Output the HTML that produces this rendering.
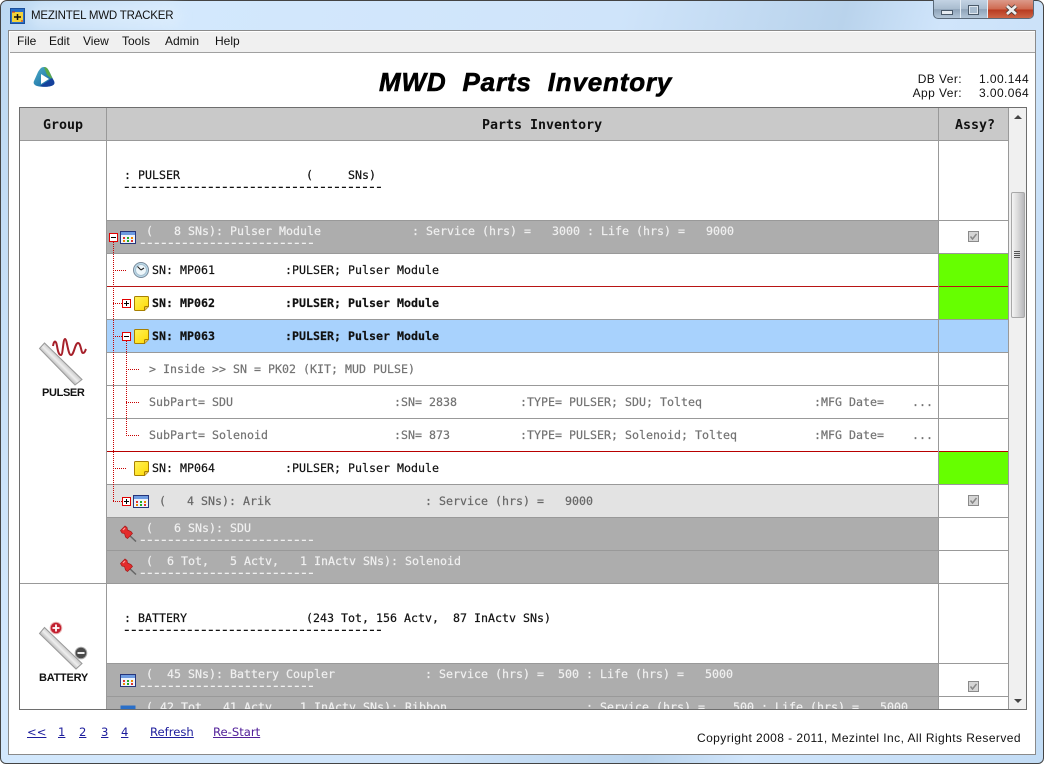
<!DOCTYPE html>
<html><head><meta charset="utf-8"><style>
html,body{margin:0;padding:0;width:1044px;height:764px;overflow:hidden;background:#fff}
#w{position:absolute;left:0;top:0;width:1042px;height:762px;border:1px solid #444;border-radius:7px 7px 6px 6px;overflow:hidden;
background:linear-gradient(105deg,#bcd8f2 0,#d3e8fd 15%,#cfe4fa 50%,#b9d3ec 68%,#d0e5fb 76%,#c2dcf5 100%)}
.a{position:absolute}
.t{position:absolute;white-space:pre;font:11.63px/16px "DejaVu Sans Mono","Liberation Mono",monospace;color:#111;-webkit-text-stroke:.2px currentColor}
.k{position:absolute;white-space:pre;font:16px/16px "DejaVu Sans Mono",monospace;letter-spacing:-2.63px;color:#111}
.s{position:absolute;white-space:pre;font:12px/16px "Liberation Sans",sans-serif;color:#111}
.w{color:#f0f0f0}.g{color:#737373}.d{color:#666}.b{font-weight:bold}
.h{position:absolute;white-space:pre;font:bold 13.3px/16px "DejaVu Sans Mono",monospace;color:#111;top:118px}
.l{position:absolute;height:1px;left:19px;width:990px;background:#999}
.v{position:absolute;width:1px;background:#999}
.r{position:absolute;left:107px;width:832px}
.u{text-decoration:underline;color:#1c1c9c;position:absolute;white-space:pre;font:11.6px/16px "DejaVu Sans",sans-serif;top:724px}
.dv{position:absolute;width:1px;background:repeating-linear-gradient(180deg,#c80000 0 1px,transparent 1px 2px)}
.dh{position:absolute;height:1px;background:repeating-linear-gradient(90deg,#c80000 0 1px,transparent 1px 2px)}
</style></head><body>
<div id="w"></div>
<!-- title bar -->
<div class="a" style="left:30px;top:4px;width:150px;height:24px;background:#e2f0fd;opacity:.55;filter:blur(6px);border-radius:10px"></div>
<svg class="a" style="left:10px;top:8px" width="15" height="16"><rect x=".5" y=".5" width="14" height="15" fill="#2a6fc8" stroke="#1b4f9a"/><rect x="2" y="4" width="11" height="10" fill="#f2d23a"/><path d="M4 9h7M7.500 6v6" stroke="#111" stroke-width="1.500"/><path d="M2 4h3M11 13h2" stroke="#c22" /></svg>
<div class="s" style="left:31px;top:8px;color:#111;font-size:11.5px;letter-spacing:-.2px">MEZINTEL MWD TRACKER</div>
<!-- window buttons -->
<div class="a" style="left:933px;top:0;width:101px;height:19px;border:1px solid #5a6a7a;border-top:0;border-radius:0 0 5px 5px;box-sizing:border-box;background:linear-gradient(#c3d3e4,#a9bccf 50%,#8fa4b9 52%,#b3c6d8);overflow:hidden">
<div class="a" style="left:53px;top:0;width:47px;height:19px;background:linear-gradient(#dc9a8a,#cf6a50 48%,#b83a20 52%,#d06a4a)"></div>
<div class="a" style="left:26px;top:0;width:1px;height:19px;background:#e4edf5"></div>
<div class="a" style="left:53px;top:0;width:1px;height:19px;background:#e4edf5"></div></div>
<div class="a" style="left:941px;top:10px;width:10px;height:3px;background:#e6ecf2;border:1px solid #4a5a6a"></div>
<div class="a" style="left:968px;top:5px;width:9px;height:8px;border:1px solid #4a5a6a;box-shadow:0 0 0 1px #dfe7ef inset;background:#a8bccf"></div>
<svg class="a" style="left:1003px;top:3px" width="18" height="14"><path d="M4 3l9 8M13 3L4 11" stroke="#4a3a36" stroke-width="4.500"/><path d="M4 3l9 8M13 3L4 11" stroke="#eee" stroke-width="2.800"/></svg>
<!-- client -->
<div class="a" style="left:9px;top:31px;width:1026px;height:723px;background:#fff;outline:1px solid #8a8a8a"></div>
<div class="a" style="left:10px;top:32px;width:1025px;height:20px;background:#f0f0f0;border-bottom:1px solid #a0a0a0"></div>
<div class="s" style="left:17px;top:33px">File</div>
<div class="s" style="left:49px;top:33px">Edit</div>
<div class="s" style="left:83px;top:33px">View</div>
<div class="s" style="left:122px;top:33px">Tools</div>
<div class="s" style="left:165px;top:33px">Admin</div>
<div class="s" style="left:215px;top:33px">Help</div>
<!-- logo -->
<svg class="a" style="left:32px;top:65px" width="24" height="24"><defs><linearGradient id="lg" x1="0" y1="0" x2="1" y2="1"><stop offset="0" stop-color="#4fb0c8"/><stop offset="1" stop-color="#0f5f9e"/></linearGradient></defs><path d="M12 2c3 0 4 2 6 6l4 8c1 3 0 4-3 5-4 1-10 1-14 0-3-1-4-3-3-5l4-9c2-3 3-5 6-5z" fill="url(#lg)"/><path d="M12 2c3 0 4 2 6 6l3 7-6-5z" fill="#5aa848"/><path d="M22 16c1 3 0 4-3 5-4 1-8 1-11 0l8-5 4-3z" fill="#15419c"/><path d="M9 9l8 5-8 5z" fill="#fff"/></svg>
<div class="a" style="left:379px;top:66px;white-space:pre;font:italic bold 26px/32px 'Liberation Sans',sans-serif;color:#000;letter-spacing:.82px;-webkit-text-stroke:.6px #000">MWD  Parts  Inventory</div>
<div class="s" style="right:82px;top:71px;letter-spacing:.42px">DB Ver:</div>
<div class="s" style="right:82px;top:85px;letter-spacing:.42px">App Ver:</div>
<div class="s" style="left:979px;top:71px;letter-spacing:.42px">1.00.144</div>
<div class="s" style="left:979px;top:85px;letter-spacing:.42px">3.00.064</div>

<!-- table backgrounds -->
<div class="a" style="left:19px;top:107px;width:990px;height:33px;background:#c9c9c9"></div>
<div class="a" style="left:1009px;top:107px;width:18px;height:602px;background:#f0f0f0"></div>
<div class="r" style="top:221px;height:32px;background:#adadad"></div>
<div class="r" style="top:320px;height:32px;width:901px;background:#a8d2fd"></div>
<div class="r" style="top:485px;height:32px;background:#e3e3e3"></div>
<div class="r" style="top:518px;height:65px;background:#adadad"></div>
<div class="r" style="top:664px;height:45px;background:#adadad"></div>
<div class="a" style="left:939px;top:254px;width:69px;height:65px;background:#66ff00"></div>
<div class="a" style="left:939px;top:452px;width:69px;height:32px;background:#66ff00"></div>

<!-- lines -->
<div class="l" style="top:140px"></div>
<div class="l" style="left:106px;width:903px;top:220px"></div>
<div class="l" style="left:106px;width:903px;top:253px"></div>
<div class="l" style="left:106px;width:903px;top:286px;background:#b81414"></div>
<div class="l" style="left:106px;width:903px;top:319px"></div>
<div class="l" style="left:106px;width:903px;top:352px"></div>
<div class="l" style="left:106px;width:903px;top:385px"></div>
<div class="l" style="left:106px;width:903px;top:418px"></div>
<div class="l" style="left:106px;width:903px;top:451px;background:#b80000"></div>
<div class="l" style="left:106px;width:903px;top:484px"></div>
<div class="l" style="left:106px;width:903px;top:517px"></div>
<div class="l" style="left:106px;width:903px;top:550px"></div>
<div class="l" style="top:583px"></div>
<div class="l" style="left:106px;width:903px;top:663px"></div>
<div class="l" style="left:106px;width:903px;top:696px"></div>
<div class="v" style="left:106px;top:107px;height:602px"></div>
<div class="v" style="left:938px;top:107px;height:602px"></div>
<div class="v" style="left:1008px;top:107px;height:602px"></div>
<div class="a" style="left:19px;top:107px;width:1006px;height:601px;border:1px solid #6e6e6e"></div>

<!-- headers -->
<div class="h" style="left:43px">Group</div>
<div class="h" style="left:482px">Parts Inventory</div>
<div class="h" style="left:955px">Assy?</div>

<!-- text rows -->
<div class="t" style="left:124px;top:167px">: PULSER                  (     SNs)</div>
<div class="k" style="left:122px;top:179px">-------------------------------------</div>

<div class="t w" style="left:146px;top:223px">(   8 SNs): Pulser Module</div>
<div class="t w" style="left:412px;top:223px">: Service (hrs) =   3000 : Life (hrs) =   9000</div>
<div class="k w" style="left:138px;top:235px">-------------------------</div>

<div class="t" style="left:152px;top:262px">SN: MP061          :PULSER; Pulser Module</div>
<div class="t b" style="left:152px;top:295px">SN: MP062          :PULSER; Pulser Module</div>
<div class="t b" style="left:152px;top:328px">SN: MP063          :PULSER; Pulser Module</div>
<div class="t g" style="left:149px;top:361px">&gt; Inside &gt;&gt; SN = PK02 (KIT; MUD PULSE)</div>
<div class="t g" style="left:149px;top:394px">SubPart= SDU</div>
<div class="t g" style="left:394px;top:394px">:SN= 2838</div>
<div class="t g" style="left:520px;top:394px">:TYPE= PULSER; SDU; Tolteq</div>
<div class="t g" style="left:814px;top:394px">:MFG Date=</div>
<div class="t g" style="left:912px;top:394px">...</div>
<div class="t g" style="left:149px;top:427px">SubPart= Solenoid</div>
<div class="t g" style="left:394px;top:427px">:SN= 873</div>
<div class="t g" style="left:520px;top:427px">:TYPE= PULSER; Solenoid; Tolteq</div>
<div class="t g" style="left:814px;top:427px">:MFG Date=</div>
<div class="t g" style="left:912px;top:427px">...</div>
<div class="t" style="left:152px;top:460px">SN: MP064          :PULSER; Pulser Module</div>
<div class="t d" style="left:159px;top:493px">(   4 SNs): Arik</div>
<div class="t d" style="left:425px;top:493px">: Service (hrs) =   9000</div>
<div class="t w" style="left:146px;top:520px">(   6 SNs): SDU</div>
<div class="k w" style="left:138px;top:532px">-------------------------</div>
<div class="t w" style="left:146px;top:553px">(  6 Tot,   5 Actv,   1 InActv SNs): Solenoid</div>
<div class="k w" style="left:138px;top:565px">-------------------------</div>
<div class="t" style="left:124px;top:610px">: BATTERY</div>
<div class="t" style="left:306px;top:610px">(243 Tot, 156 Actv,  87 InActv SNs)</div>
<div class="k" style="left:122px;top:622px">-------------------------------------</div>
<div class="t w" style="left:146px;top:666px">(  45 SNs): Battery Coupler</div>
<div class="t w" style="left:425px;top:666px">: Service (hrs) =  500 : Life (hrs) =   5000</div>
<div class="k w" style="left:138px;top:678px">-------------------------</div>
<div class="a" style="left:107px;top:697px;width:831px;height:12px;overflow:hidden">
<div class="t w" style="left:39px;top:2px">( 42 Tot,  41 Actv,   1 InActv SNs): Ribbon</div>
<div class="t w" style="left:479px;top:2px">: Service (hrs) =    500 : Life (hrs) =   5000</div>
<svg class="a" style="left:13px;top:8px" width="16" height="6"><rect x=".5" y=".5" width="15" height="12" fill="#2a6fc8"/></svg>
</div>

<!-- tree dotted lines -->
<div class="dv" style="left:113px;top:242px;height:260px"></div>
<div class="dh" style="left:113px;top:270px;width:13px"></div>
<div class="dh" style="left:113px;top:303px;width:9px"></div>
<div class="dh" style="left:113px;top:336px;width:9px"></div>
<div class="dh" style="left:113px;top:468px;width:13px"></div>
<div class="dh" style="left:113px;top:501px;width:9px"></div>
<div class="dv" style="left:126px;top:341px;height:95px"></div>
<div class="dh" style="left:126px;top:369px;width:13px"></div>
<div class="dh" style="left:126px;top:402px;width:13px"></div>
<div class="dh" style="left:126px;top:435px;width:13px"></div>

<!-- expanders -->
<svg width="0" height="0" style="position:absolute"><defs>
<linearGradient id="sy" x1="0" y1="0" x2="1" y2="1"><stop offset="0" stop-color="#fff35a"/><stop offset="1" stop-color="#ffd800"/></linearGradient>
<g id="pm"><rect x=".5" y=".5" width="8" height="8" fill="#fff" stroke="#e00000"/><path d="M2 4.500h5" stroke="#000"/></g>
<g id="pp"><rect x=".5" y=".5" width="8" height="8" fill="#fff" stroke="#e00000"/><path d="M2 4.500h5M4.500 2v5" stroke="#000"/></g>
<g id="tb"><rect x=".5" y=".5" width="15" height="12" fill="#eef3fb" stroke="#26357a"/><rect x="1" y="1" width="14" height="3" fill="#6d9ae0"/><rect x="3" y="6" width="2" height="2" fill="#d33"/><rect x="7" y="6" width="2" height="2" fill="#2a2"/><rect x="11" y="6" width="2" height="2" fill="#e80"/><rect x="3" y="9" width="2" height="2" fill="#e80"/><rect x="7" y="9" width="2" height="2" fill="#2a2"/><rect x="11" y="9" width="2" height="2" fill="#d33"/></g>
<g id="st"><path d="M.5 1.500q0-1 1-1h12q1 0 1 1v9l-4 4h-9q-1 0-1-1z" fill="url(#sy)" stroke="#a88000"/><path d="M10.500 14.500v-3q0-1 1-1h3" fill="#e8c050" stroke="#a88000"/></g>
<g id="pin"><path d="M8 9l8 7.500" stroke="#666" stroke-width="1.500"/><path d="M.5 5.500L5 1l2 1.500.5 2.500 3.500 1.500 1.500 2-5 5-2-1.500-1-3.500-2.500-.5z" fill="#e42c2c" stroke="#a51818" stroke-width=".7"/><path d="M3 5l2-2" stroke="#ff9c9c" stroke-width="1.200"/></g>
<g id="ck"><rect x=".5" y=".5" width="10" height="10" fill="#d5d5d5" stroke="#8a8a8a"/><path d="M2.500 5.500l2 2.500 4-5" fill="none" stroke="#888" stroke-width="1.500"/></g>
</defs></svg>
<svg class="a" style="left:109px;top:233px" width="9" height="9"><use href="#pm"/></svg>
<svg class="a" style="left:120px;top:231px" width="16" height="13"><use href="#tb"/></svg>
<svg class="a" style="left:133px;top:262px" width="16" height="16"><circle cx="8" cy="8" r="7.500" fill="#bcdcec" stroke="#7a8a9a"/><circle cx="8" cy="8" r="5.500" fill="#eef7fb" stroke="#a8c0d0"/><path d="M8 8L4.500 4.500M8 8l3-2" stroke="#222" stroke-width="1.100"/></svg>
<svg class="a" style="left:122px;top:299px" width="9" height="9"><use href="#pp"/></svg>
<svg class="a" style="left:134px;top:296px" width="15" height="15"><use href="#st"/></svg>
<svg class="a" style="left:122px;top:332px" width="9" height="9"><use href="#pm"/></svg>
<svg class="a" style="left:134px;top:329px" width="15" height="15"><use href="#st"/></svg>
<svg class="a" style="left:134px;top:461px" width="15" height="15"><use href="#st"/></svg>
<svg class="a" style="left:122px;top:497px" width="9" height="9"><use href="#pp"/></svg>
<svg class="a" style="left:133px;top:495px" width="16" height="13"><use href="#tb"/></svg>
<svg class="a" style="left:120px;top:525px" width="17" height="17"><use href="#pin"/></svg>
<svg class="a" style="left:120px;top:558px" width="17" height="17"><use href="#pin"/></svg>
<svg class="a" style="left:120px;top:674px" width="16" height="13"><use href="#tb"/></svg>

<!-- checkboxes -->
<svg class="a" style="left:968px;top:231px" width="11" height="11"><use href="#ck"/></svg>
<svg class="a" style="left:968px;top:495px" width="11" height="11"><use href="#ck"/></svg>
<svg class="a" style="left:968px;top:681px" width="11" height="11"><use href="#ck"/></svg>

<!-- group icons -->
<svg class="a" style="left:36px;top:336px" width="54" height="52"><defs><linearGradient id="bar" gradientUnits="userSpaceOnUse" x1="21" y1="32" x2="28" y2="25"><stop offset="0" stop-color="#b0b0b0"/><stop offset=".5" stop-color="#eee"/><stop offset="1" stop-color="#c4c4c4"/></linearGradient></defs>
<path d="M3.500 12.500l5-5.500 37.500 36.500-7 5.500z" fill="url(#bar)" stroke="#999"/>
<path d="M17 10C18 4 20 4 21 10S23 19 25 19 27 3 29 3 32 19 35 19 39 7 42 7 45 17 47 17 49 15 50 13" fill="none" stroke="#a6202a" stroke-width="2"/></svg>
<div class="s b" style="left:42px;top:385px;font-size:11px;font-weight:bold;letter-spacing:-.35px">PULSER</div>
<svg class="a" style="left:36px;top:620px" width="54" height="52"><defs><linearGradient id="bar2" gradientUnits="userSpaceOnUse" x1="21" y1="32" x2="28" y2="25"><stop offset="0" stop-color="#b0b0b0"/><stop offset=".5" stop-color="#eee"/><stop offset="1" stop-color="#c4c4c4"/></linearGradient></defs>
<path d="M3.500 13.500l5-6 37.500 36-6 5.500z" fill="url(#bar2)" stroke="#999"/>
<circle cx="20" cy="8" r="5.800" fill="#c22030" stroke="#e8b0b0"/><path d="M16.500 8h7M20 4.500v7" stroke="#fff" stroke-width="1.800"/>
<circle cx="45" cy="33" r="5.800" fill="#4a4a4a" stroke="#aaa"/><path d="M41.500 33h7" stroke="#fff" stroke-width="1.800"/></svg>
<div class="s b" style="left:39px;top:670px;font-size:11px;font-weight:bold;letter-spacing:-.25px">BATTERY</div>

<!-- scrollbar -->
<div class="a" style="left:1011px;top:192px;width:14px;height:126px;box-sizing:border-box;border:1px solid #a8a8a8;border-radius:2px;background:linear-gradient(90deg,#f4f4f4,#dcdcdc 45%,#b8b8bc)"></div>
<svg class="a" style="left:1013px;top:250px" width="9" height="9"><path d="M1 1.500h6M1 3.500h6M1 5.500h6M1 7.500h6" stroke="#555"/></svg>
<svg class="a" style="left:1014px;top:114px" width="9" height="6"><path d="M0 5L4 1l4 4z" fill="#444"/></svg>
<svg class="a" style="left:1014px;top:698px" width="9" height="6"><path d="M0 1L4 5l4-4z" fill="#444"/></svg>

<!-- footer -->
<div class="u" style="left:27px">&lt;&lt;</div>
<div class="u" style="left:58px">1</div>
<div class="u" style="left:79px">2</div>
<div class="u" style="left:101px">3</div>
<div class="u" style="left:121px">4</div>
<div class="u" style="left:150px">Refresh</div>
<div class="u" style="left:213px;color:#52209a">Re-Start</div>
<div class="s" style="right:23px;top:730px;letter-spacing:.43px">Copyright 2008 - 2011, Mezintel Inc, All Rights Reserved</div>
</body></html>
